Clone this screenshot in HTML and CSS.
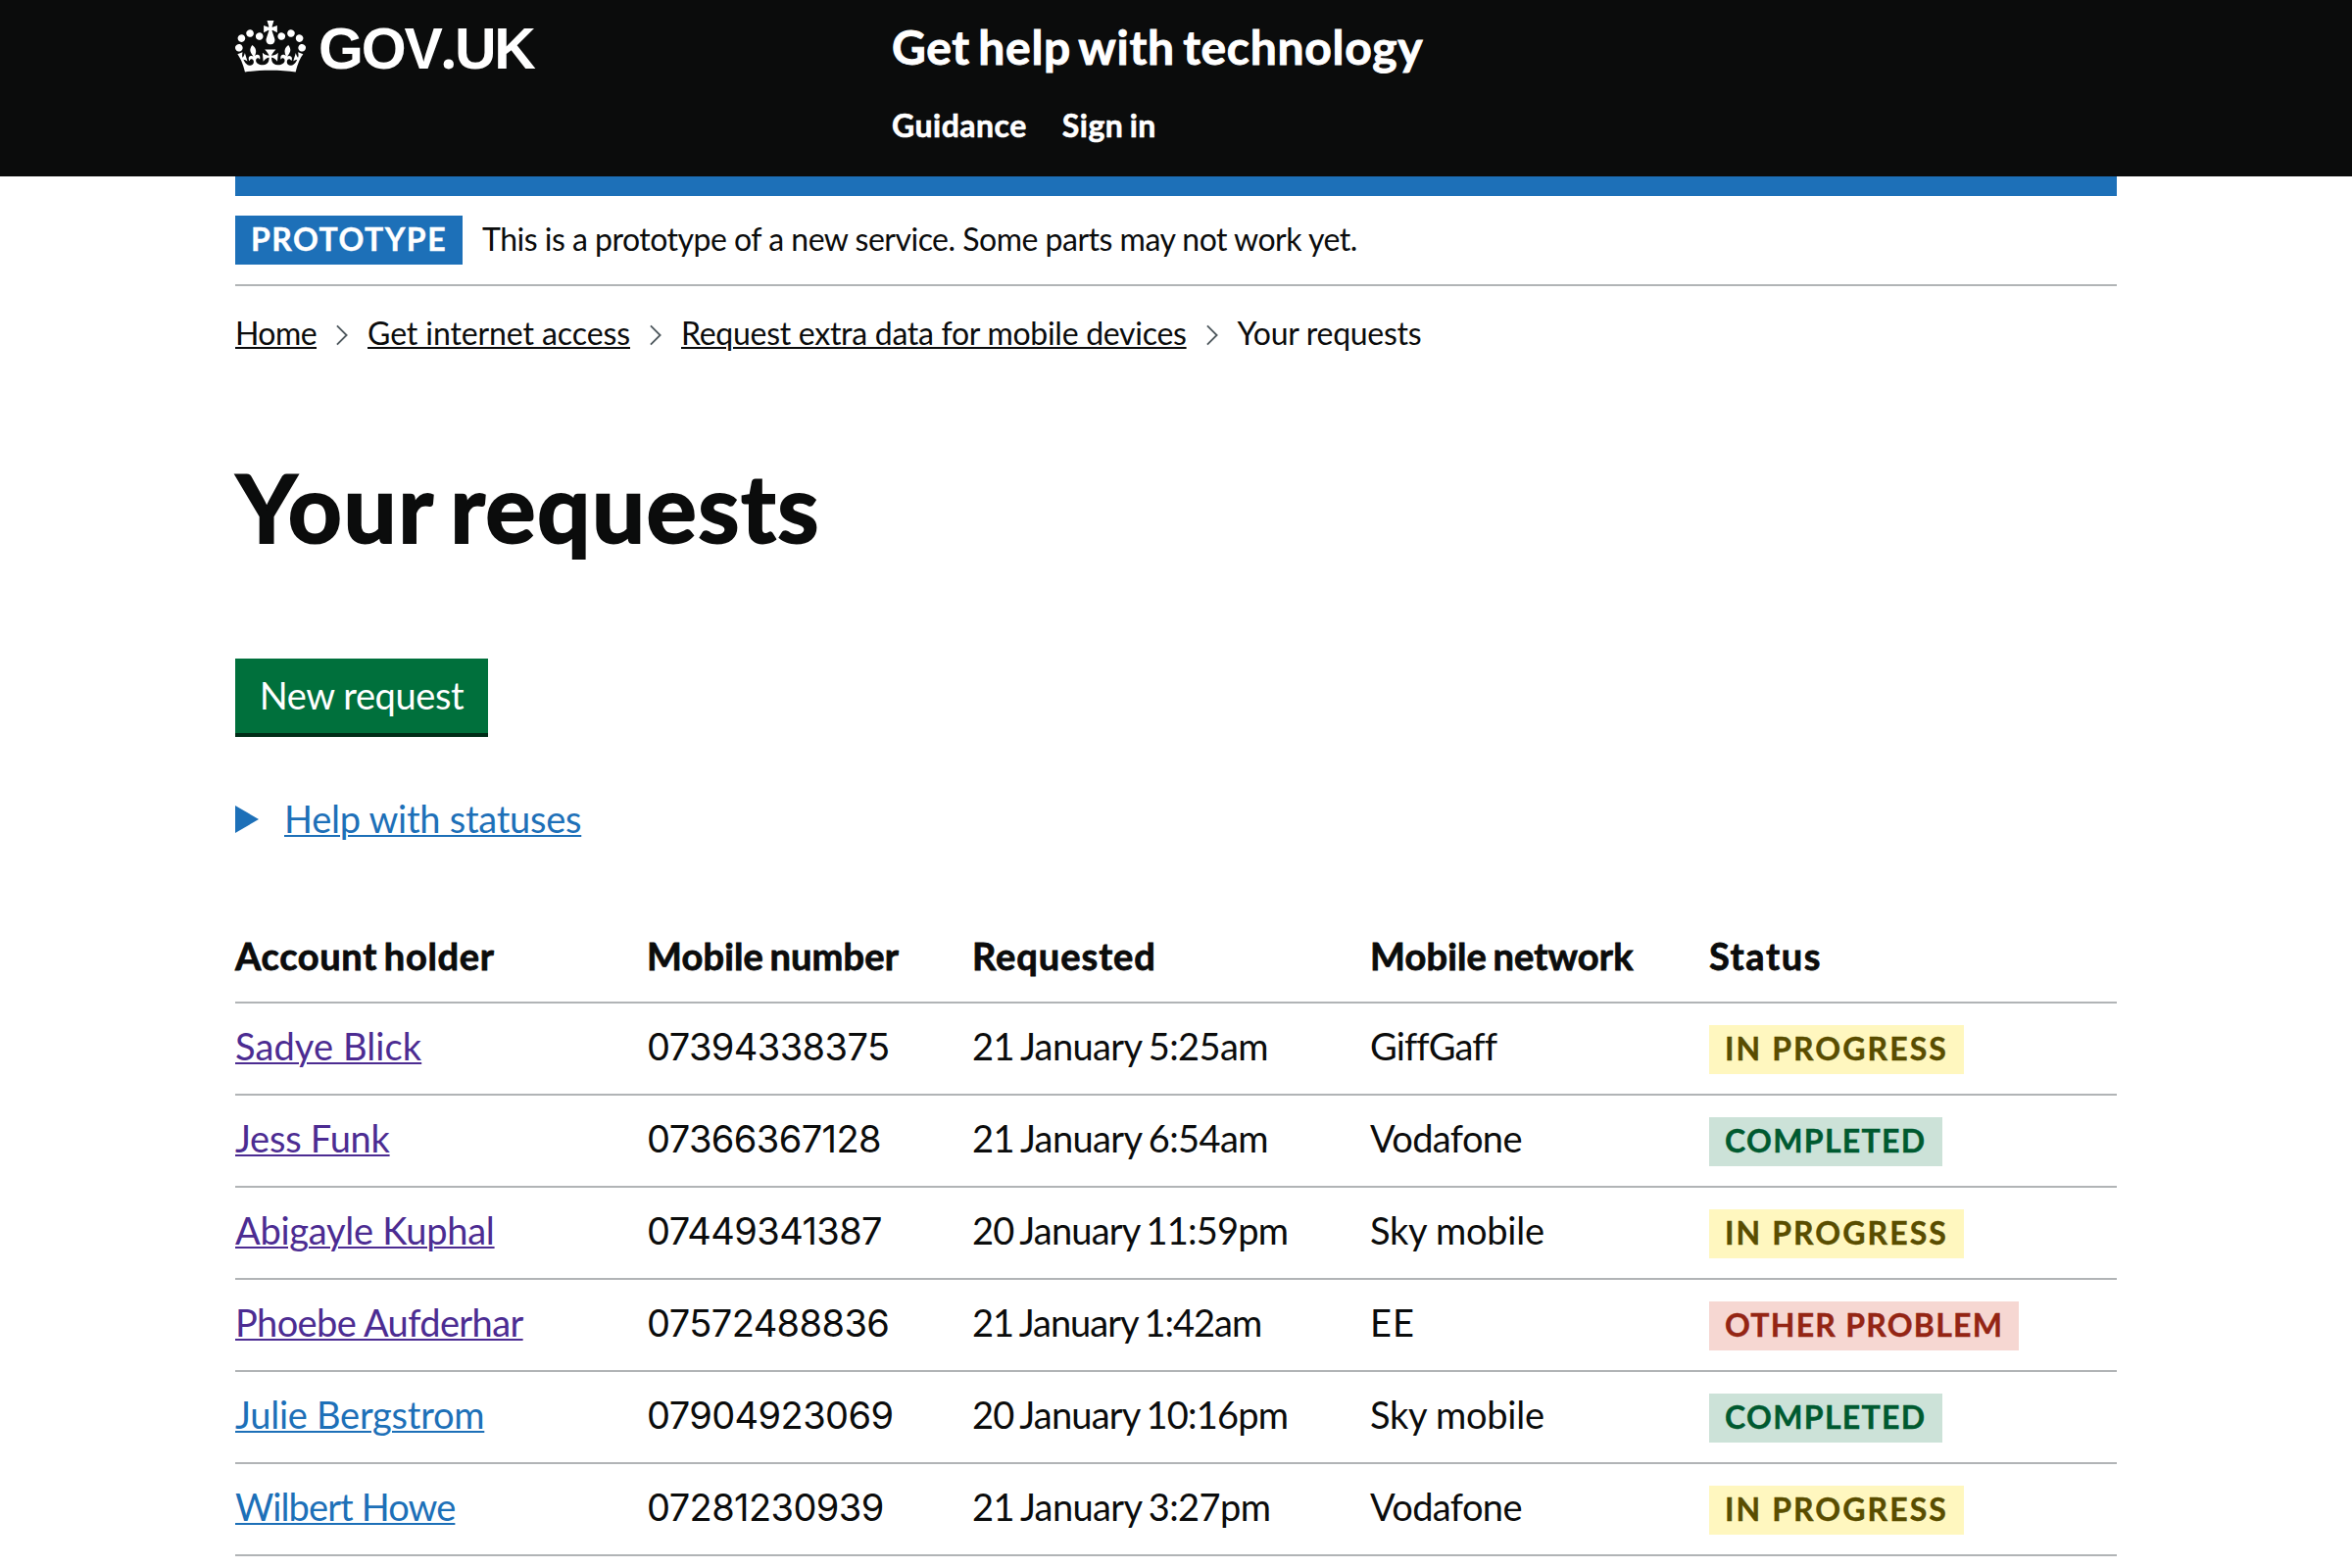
FILE: index.html
```html
<!DOCTYPE html>
<html lang="en">
<head>
  <meta charset="utf-8">
  <title>Your requests - Get help with technology - GOV.UK</title>
  <link rel="stylesheet" href="styles.css">
</head>
<body>
  <header class="header">
    <div class="container header-grid">
      <a class="logo" href="#">
        <svg class="crown" viewBox="0 0 132 97" width="72" height="53" aria-hidden="true"><path fill="currentColor" d="M25 30.2c3.5 1.5 7.7-.2 9.1-3.7 1.5-3.6-.2-7.8-3.9-9.2-3.6-1.4-7.6.3-9.1 3.9-1.4 3.5.3 7.5 3.9 9zM9 39.5c3.6 1.5 7.8-.2 9.2-3.7 1.5-3.6-.2-7.8-3.9-9.1-3.6-1.5-7.6.2-9.1 3.8-1.4 3.5.3 7.5 3.8 9zM4.4 57.2c3.5 1.5 7.7-.2 9.1-3.8 1.5-3.6-.2-7.7-3.9-9.1-3.5-1.5-7.6.3-9.1 3.8-1.4 3.5.3 7.6 3.9 9.1zm38.3-21.4c3.5 1.5 7.7-.2 9.1-3.8 1.5-3.6-.2-7.7-3.9-9.1-3.6-1.5-7.6.3-9.1 3.8-1.3 3.6.4 7.7 3.9 9.1zm64.4-5.6c-3.6 1.5-7.8-.2-9.1-3.7-1.5-3.6.2-7.8 3.8-9.2 3.6-1.4 7.7.3 9.2 3.9 1.3 3.5-.4 7.5-3.9 9zm15.9 9.3c-3.6 1.5-7.7-.2-9.1-3.7-1.5-3.6.2-7.8 3.7-9.1 3.6-1.5 7.7.2 9.2 3.8 1.5 3.5-.3 7.5-3.8 9zm4.7 17.7c-3.6 1.5-7.8-.2-9.2-3.8-1.5-3.6.2-7.7 3.9-9.1 3.6-1.5 7.7.3 9.2 3.8 1.3 3.5-.4 7.6-3.9 9.1zM89.3 35.8c-3.6 1.5-7.8-.2-9.2-3.8-1.4-3.6.2-7.7 3.9-9.1 3.6-1.5 7.7.3 9.2 3.8 1.4 3.6-.3 7.7-3.9 9.1zM69.7 17.7l8.9 4.7V9.3l-8.9 2.8c-.2-.3-.5-.6-.9-.9L72.4 0H59.6l3.5 11.2c-.3.3-.6.5-.9.9l-8.8-2.8v13.1l8.8-4.7c.3.3.6.7.9.9l-5 15.4v.1c-.2.8-.4 1.6-.4 2.4 0 4.1 3.1 7.5 7 8.1h.2c.3 0 .7.1 1 .1.4 0 .7 0 1-.1h.2c4-.6 7.1-4.1 7.1-8.1 0-.8-.1-1.7-.4-2.4V34l-5.1-15.4c.4-.2.7-.6 1-.9zM66 92.8c16.9 0 32.8 1.1 47.1 3.2 4-16.9 8.9-26.7 14-33.5l-9.6-3.4c1 4.9 1.1 7.2 0 10.2-1.5-1.4-3-4.3-4.2-8.7L108.6 76c2.8-2 5-3.2 7.5-3.3-4.4 9.4-10 11.9-13.6 11.2-4.3-.8-6.3-4.6-5.6-7.9 1-4.7 5.7-5.9 8-.5 4.3-8.7-3-11.4-7.6-8.8 7.1-7.2 7.9-13.5 2.1-21.1-8 6.1-8.1 12.3-4.5 20.8-4.7-5.4-12.1-2.5-9.5 6.2 3.4-5.2 7.9-2 7.2 3.1-.6 4.3-6.4 7.8-13.5 7.2-10.3-.9-10.9-8-11.2-13.8 2.5-.5 7.1 1.8 11 7.3L80.2 60c-4.1 4.4-8 5.3-12.3 5.4 1.4-4.4 8-11.6 8-11.6H55.5s6.4 7.2 7.9 11.6c-4.2-.1-8-1-12.3-5.4l1.4 16.4c3.9-5.5 8.5-7.7 10.9-7.3-.3 5.8-.9 12.8-11.1 13.8-7.2.6-12.9-2.9-13.5-7.2-.7-5 3.8-8.3 7.1-3.1 2.7-8.7-4.6-11.6-9.4-6.2 3.7-8.5 3.6-14.7-4.6-20.8-5.8 7.6-5 13.9 2.2 21.1-4.7-2.6-11.9.1-7.7 8.8 2.3-5.5 7.1-4.2 8.1.5.7 3.3-1.3 7.1-5.7 7.9-3.5.7-9-1.8-13.5-11.2 2.5.1 4.7 1.3 7.5 3.3l-4.7-15.4c-1.2 4.4-2.7 7.2-4.3 8.7-1.1-3-.9-5.3 0-10.2l-9.5 3.4c5 6.9 9.9 16.7 14 33.5 14.8-2.1 30.8-3.2 47.7-3.2z"/></svg>
        <span class="logotype">GOV<span class="logo-dot">.</span>UK</span>
      </a>
      <div>
        <a class="service-name" href="#">Get help with technology</a>
        <nav class="nav">
          <a href="#">Guidance</a>
          <a href="#">Sign in</a>
        </nav>
      </div>
    </div>
  </header>

  <div class="container">
    <div class="blue-bar"></div>
    <div class="phase-banner">
      <strong class="tag tag-phase">PROTOTYPE</strong>
      <span class="phase-text">This is a prototype of a new service. Some parts may not work yet.</span>
    </div>

    <nav class="breadcrumbs">
      <a class="crumb-home" href="#">Home</a>
      <svg class="chevron" viewBox="0 0 13 24" width="12" height="24" aria-hidden="true"><path d="M1 1.5 11.5 12 1 22.5"/></svg>
      <a class="crumb-internet" href="#">Get internet access</a>
      <svg class="chevron" viewBox="0 0 13 24" width="12" height="24" aria-hidden="true"><path d="M1 1.5 11.5 12 1 22.5"/></svg>
      <a href="#">Request extra data for mobile devices</a>
      <svg class="chevron" viewBox="0 0 13 24" width="12" height="24" aria-hidden="true"><path d="M1 1.5 11.5 12 1 22.5"/></svg>
      <span>Your requests</span>
    </nav>

    <main>
      <h1 class="title">Your requests</h1>
      <a class="button" href="#">New request</a>
      <div class="details">
        <svg class="triangle" viewBox="0 0 24 28" width="24" height="28" aria-hidden="true"><path d="M0 0 24 14 0 28z"/></svg>
        <a class="details-link" href="#">Help with statuses</a>
      </div>

      <table class="requests">
        <colgroup>
          <col class="col-holder"><col class="col-number"><col class="col-date"><col class="col-network"><col>
        </colgroup>
        <thead>
          <tr><th>Account holder</th><th class="snug">Mobile number</th><th class="wide">Requested</th><th class="snug">Mobile network</th><th class="wider">Status</th></tr>
        </thead>
        <tbody>
          <tr>
            <td><a class="visited loose" href="#">Sadye Blick</a></td><td class="number">07394338375</td><td class="date">21 January 5:25am</td><td class="tighter">GiffGaff</td>
            <td class="status"><strong class="tag tag-progress">IN PROGRESS</strong></td>
          </tr>
          <tr>
            <td><a class="visited" href="#">Jess Funk</a></td><td class="number">07366367128</td><td class="date">21 January 6:54am</td><td class="tight">Vodafone</td>
            <td class="status"><strong class="tag tag-completed">COMPLETED</strong></td>
          </tr>
          <tr>
            <td><a class="visited" href="#">Abigayle Kuphal</a></td><td class="number">07449341387</td><td class="date date-long">20 January 11:59pm</td><td>Sky mobile</td>
            <td class="status"><strong class="tag tag-progress">IN PROGRESS</strong></td>
          </tr>
          <tr>
            <td><a class="visited tight" href="#">Phoebe Aufderhar</a></td><td class="number">07572488836</td><td class="date date-tight">21 January 1:42am</td><td class="wide">EE</td>
            <td class="status"><strong class="tag tag-problem">OTHER PROBLEM</strong></td>
          </tr>
          <tr>
            <td><a class="link" href="#">Julie Bergstrom</a></td><td class="number">07904923069</td><td class="date date-long">20 January 10:16pm</td><td>Sky mobile</td>
            <td class="status"><strong class="tag tag-completed">COMPLETED</strong></td>
          </tr>
          <tr>
            <td><a class="link tighter" href="#">Wilbert Howe</a></td><td class="number">07281230939</td><td class="date">21 January 3:27pm</td><td class="tight">Vodafone</td>
            <td class="status"><strong class="tag tag-progress">IN PROGRESS</strong></td>
          </tr>
        </tbody>
      </table>
    </main>
  </div>
</body>
</html>
```

FILE: styles.css
```css
* {
  box-sizing: border-box;
}

body {
  margin: 0;
  background: #fff;
  color: #0b0c0c;
  font-family: Lato, "Noto Sans", sans-serif;
  font-size: 38px;
  line-height: 50px;
}

a {
  color: inherit;
  text-decoration-thickness: 2px;
  text-underline-offset: 2px;
}

.container {
  width: 1920px;
  margin: 0 auto;
}

/* Header */

.header {
  height: 180px;
  padding-top: 18px;
  background: #0b0c0c;
  color: #fff;
}

.header a {
  text-decoration: none;
}

.header-grid {
  display: grid;
  grid-template-columns: 670px 1fr;
}

.logo {
  display: flex;
  align-items: flex-start;
  gap: 13px;
}

.crown {
  margin-top: 3px;
}

.logotype {
  font: bold 59px/64px "Liberation Sans", Arial, sans-serif;
  letter-spacing: -2.2px;
}

.logo-dot {
  font-family: "Noto Sans", sans-serif;
  line-height: 1;
}

.service-name {
  display: block;
  font-size: 48px;
  font-weight: 700;
  line-height: 60px;
  letter-spacing: 0.7px;
  word-spacing: -4px;
  -webkit-text-stroke: 0.9px currentColor;
}

.nav {
  display: flex;
  gap: 36px;
  margin-top: 30px;
  font-size: 32px;
  font-weight: 700;
  line-height: 40px;
  letter-spacing: 0.5px;
  word-spacing: -2px;
  -webkit-text-stroke: 0.6px currentColor;
}

/* Phase banner */

.blue-bar {
  height: 20px;
  background: #1d70b8;
}

.phase-banner {
  display: flex;
  gap: 20px;
  padding: 20px 0;
  border-bottom: 2px solid #b1b4b6;
}

.phase-text {
  padding-top: 4px;
  font-size: 32px;
  line-height: 40px;
  letter-spacing: -0.5px;
}

.tag {
  display: block;
  width: max-content;
  height: 50px;
  padding: 0 16px;
  font-size: 32px;
  font-weight: 700;
  line-height: 48px;
  white-space: nowrap;
  -webkit-text-stroke: 0.4px currentColor;
}

.tag-phase {
  background: #1d70b8;
  color: #fff;
  letter-spacing: 1.47px;
}

.tag-progress {
  background: #fff7bf;
  color: #594d00;
  letter-spacing: 2.07px;
}

.tag-completed {
  background: #cce2d8;
  color: #005a30;
  letter-spacing: 1.33px;
}

.tag-problem {
  background: #f6d7d2;
  color: #942514;
  letter-spacing: 1.25px;
}

/* Breadcrumbs */

.breadcrumbs {
  display: flex;
  align-items: center;
  gap: 20px;
  margin-top: 28px;
  font-size: 32px;
  line-height: 40px;
  letter-spacing: -0.28px;
}

.crumb-home {
  letter-spacing: -0.57px;
}

.crumb-internet {
  letter-spacing: -0.09px;
}

.chevron {
  margin-top: 4px;
  fill: none;
  stroke: #505a5f;
  stroke-width: 2;
}

/* Page content */

.title {
  margin: 107px 0 105px 1px;
  font-size: 96px;
  font-weight: 700;
  line-height: 100px;
  letter-spacing: 1.5px;
  word-spacing: -7px;
  -webkit-text-stroke: 2px currentColor;
}

.button {
  display: block;
  width: 258px;
  height: 76px;
  padding-top: 12px;
  background: #00703c;
  box-shadow: 0 4px 0 #002d18;
  color: #fff;
  letter-spacing: -0.4px;
  text-align: center;
  text-decoration: none;
}

.details {
  display: flex;
  gap: 26px;
  margin-top: 62px;
  color: #1d70b8;
}

.triangle {
  margin-top: 12px;
  fill: currentColor;
}

.details-link {
  letter-spacing: -0.25px;
}

/* Requests table */

.requests {
  width: 100%;
  margin-top: 70px;
  border-spacing: 0;
  table-layout: fixed;
}

.col-holder { width: 420px; }
.col-number { width: 332px; }
.col-date { width: 406px; }
.col-network { width: 346px; }

.requests th,
.requests td {
  padding: 18px 0 24px;
  border-bottom: 2px solid #b1b4b6;
  letter-spacing: -0.25px;
  text-align: left;
  vertical-align: top;
  white-space: nowrap;
}

.requests th {
  padding: 20px 0 22px;
  font-weight: 700;
  letter-spacing: 0.65px;
  word-spacing: -3px;
  -webkit-text-stroke: 0.8px currentColor;
}

.requests .number {
  padding: 19px 0 23px;
  font-family: Inter, sans-serif;
  letter-spacing: -0.58px;
}

.requests .date {
  letter-spacing: -0.6px;
  word-spacing: -2px;
}

.requests .date-long {
  letter-spacing: -0.8px;
}

.requests .date-tight {
  letter-spacing: -1px;
}

.requests .status {
  padding: 22px 0 20px;
  letter-spacing: normal;
}

.requests .wider { letter-spacing: 1.6px; }
.requests .wide { letter-spacing: 0.95px; }
.requests .snug { letter-spacing: 0.15px; }
.requests .loose { letter-spacing: 0.1px; }
.requests .tight { letter-spacing: -0.62px; }
.requests .tighter { letter-spacing: -0.9px; }

.link { color: #1d70b8; }
.visited { color: #4c2c92; }
```
